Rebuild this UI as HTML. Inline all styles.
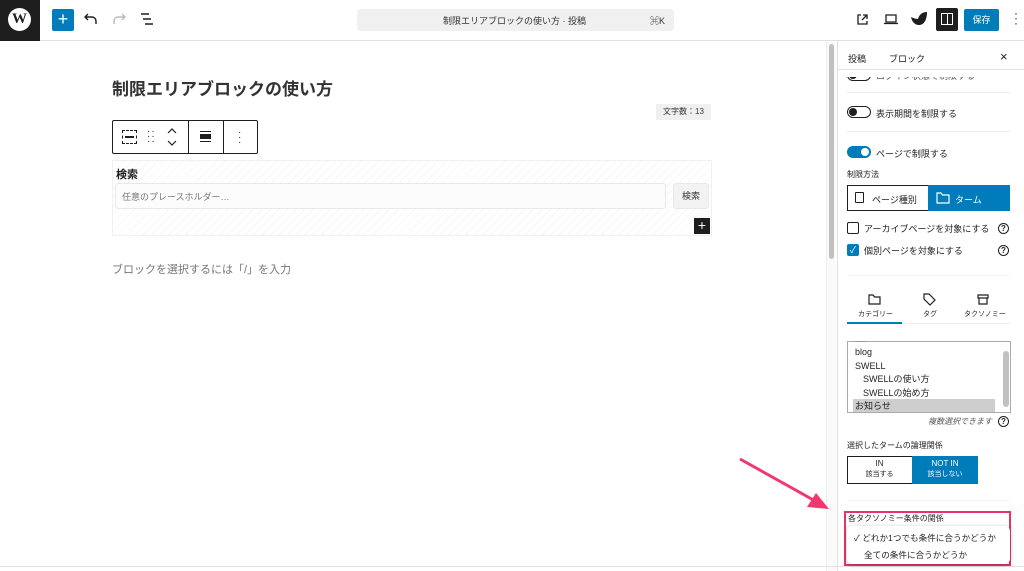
<!DOCTYPE html>
<html><head><meta charset="utf-8"><style>
*{box-sizing:border-box;margin:0;padding:0}
body{width:1024px;height:571px;overflow:hidden;background:#fff;font-family:"Liberation Sans","Noto Sans CJK JP",sans-serif;color:#1e1e1e;position:relative}
.a{position:absolute}
.t{font-size:9px;white-space:nowrap}
.tog{position:absolute;width:24px;height:12px;border-radius:6px;border:1px solid #1e1e1e;background:#fff}
.tog::after{content:"";position:absolute;left:1px;top:1px;width:8px;height:8px;border-radius:50%;background:#1e1e1e}
.hr{position:absolute;left:847px;width:163px;height:1px;background:#eee}
</style></head><body>
<div class="a" style="left:0;top:0;width:1024px;height:41px;border-bottom:1px solid #e0e0e0"></div>
<div class="a" style="left:0;top:0;width:40px;height:41px;background:#1e1e1e"></div>
<div class="a" style="left:8px;top:8px;width:23px;height:23px;border-radius:50%;background:#fff;color:#1e1e1e;font:bold 15px 'Liberation Serif',serif;text-align:center;line-height:23px">W</div>
<div class="a" style="left:52px;top:9px;width:22px;height:22px;background:#007cba;border-radius:2px;color:#fff;text-align:center;line-height:21px;font-size:18px">+</div>
<svg class="a" style="left:84px;top:13px" width="14" height="12"><path d="M4 1L1 4l3 3M1 4h7a4 4 0 0 1 4 4v3" stroke="#1e1e1e" stroke-width="1.4" fill="none"/></svg>
<svg class="a" style="left:112px;top:13px" width="14" height="12"><path d="M10 1l3 3-3 3M13 4H6a4 4 0 0 0-4 4v3" stroke="#bbb" stroke-width="1.4" fill="none"/></svg>
<svg class="a" style="left:140px;top:13px" width="14" height="12"><path d="M1 1h8M3 6h8M5 11h8" stroke="#1e1e1e" stroke-width="1.5"/></svg>
<div class="a" style="left:357px;top:9px;width:317px;height:22px;background:#f0f0f0;border-radius:3px"></div>
<div class="a t" style="left:443px;top:14px;font-size:9px;color:#333">制限エリアブロックの使い方 · 投稿</div>
<div class="a t" style="left:650px;top:14px;font-size:9px;color:#333">⌘K</div>
<svg class="a" style="left:856px;top:13px" width="13" height="13"><path d="M5 2H2v9h9V8M7 2h4v4M11 2L6 7" stroke="#1e1e1e" stroke-width="1.3" fill="none"/></svg>
<svg class="a" style="left:884px;top:13px" width="14" height="12"><path d="M2 2h10v7H2zM0 10.5h14" stroke="#1e1e1e" stroke-width="1.3" fill="none"/></svg>
<svg class="a" style="left:910px;top:11px" width="18" height="15"><path d="M17 1C12 1 9 4 8 8 6 8 3 7 1 6c1 5 4 8 8 8 5 0 8-5 8-13z" fill="#1e1e1e"/></svg>
<div class="a" style="left:936px;top:8px;width:22px;height:23px;background:#1e1e1e;border-radius:2px"></div>
<div class="a" style="left:941px;top:13px;width:12px;height:12px;border:1.3px solid #fff"></div>
<div class="a" style="left:947px;top:13px;width:1.3px;height:12px;background:#fff"></div>
<div class="a" style="left:964px;top:9px;width:35px;height:22px;background:#007cba;border-radius:2px;color:#fff;font-size:9px;text-align:center;line-height:22px">保存</div>
<div class="a" style="left:1014px;top:11px;font-size:12px;line-height:5px;color:#1e1e1e">·<br>·<br>·</div>

<div class="a" style="left:112px;top:75px;font-size:17px;font-weight:bold;color:#333">制限エリアブロックの使い方</div>
<div class="a t" style="left:656px;top:104px;width:55px;height:16px;background:#f0f0f0;font-size:8px;text-align:center;line-height:16px;color:#333">文字数：13</div>
<div class="a" style="left:112px;top:120px;width:146px;height:34px;border:1px solid #1e1e1e;border-radius:2px;background:#fff"></div>
<div class="a" style="left:188px;top:121px;width:1px;height:32px;background:#1e1e1e"></div>
<div class="a" style="left:223px;top:121px;width:1px;height:32px;background:#1e1e1e"></div>
<div class="a" style="left:122px;top:130px;width:15px;height:14px;border:1px dashed #1e1e1e"></div>
<div class="a" style="left:125px;top:136px;width:9px;height:2px;background:#1e1e1e"></div>
<div class="a" style="left:147px;top:129px;font-size:10px;line-height:5px;letter-spacing:1px">··<br>··<br>··</div>
<svg class="a" style="left:166px;top:128px" width="12" height="18"><path d="M2 5l4-4 4 4M2 13l4 4 4-4" stroke="#1e1e1e" stroke-width="1.2" fill="none"/></svg>
<div class="a" style="left:200px;top:131px;width:11px;height:1px;background:#1e1e1e"></div>
<div class="a" style="left:200px;top:134px;width:11px;height:5px;background:#1e1e1e"></div>
<div class="a" style="left:200px;top:141px;width:11px;height:1px;background:#1e1e1e"></div>
<div class="a" style="left:238px;top:130px;font-size:10px;line-height:5px">·<br>·<br>·</div>
<div class="a" style="left:112px;top:160px;width:600px;height:76px;border:1px solid #f0f0f0;background:repeating-linear-gradient(-45deg,#fff 0 5px,#f6f6f6 5px 6px)"></div>
<div class="a" style="left:116px;top:166px;font-size:11px;font-weight:bold">検索</div>
<div class="a" style="left:115px;top:183px;width:551px;height:26px;border:1px solid #e8e8e8;border-radius:3px;background:#fcfcfc"></div>
<div class="a t" style="left:122px;top:190px;color:#777">任意のプレースホルダー…</div>
<div class="a" style="left:673px;top:183px;width:36px;height:26px;background:#f3f3f3;border:1px solid #e8e8e8;border-radius:3px;font-size:9px;text-align:center;line-height:24px;color:#333">検索</div>
<div class="a" style="left:694px;top:218px;width:16px;height:16px;background:#1e1e1e;color:#fff;text-align:center;line-height:15px;font-size:14px">+</div>
<div class="a" style="left:112px;top:261px;font-size:11px;color:#757575">ブロックを選択するには「/」を入力</div>
<div class="a" style="left:826px;top:42px;width:10px;height:529px;background:#fafafa;border-left:1px solid #eee"></div>
<div class="a" style="left:829px;top:44px;width:5px;height:215px;background:#c1c1c1;border-radius:3px"></div>
<div class="a" style="left:837px;top:41px;width:1px;height:530px;background:#e0e0e0"></div>
<div class="a" style="left:0;top:566px;width:1024px;height:1px;background:#e0e0e0"></div>

<div class="a t" style="left:848px;top:52px">投稿</div>
<div class="a t" style="left:889px;top:52px">ブロック</div>
<div class="a" style="left:1000px;top:49px;font-size:13px">×</div>
<div class="a" style="left:838px;top:69px;width:186px;height:1px;background:#e0e0e0"></div>
<div class="tog" style="left:847px;top:69px"></div>
<div class="a t" style="left:876px;top:69px;color:#555">ログイン状態で制限する</div>
<div class="a" style="left:838px;top:70px;width:186px;height:7px;background:#fff"></div>
<div class="a" style="left:838px;top:69px;width:186px;height:1px;background:#e0e0e0"></div>
<div class="hr" style="top:92px"></div>
<div class="tog" style="left:847px;top:106px"></div>
<div class="a t" style="left:876px;top:107px">表示期間を制限する</div>
<div class="hr" style="top:131px"></div>
<div class="a" style="left:847px;top:146px;width:24px;height:12px;border-radius:6px;background:#007cba"></div>
<div class="a" style="left:861px;top:148px;width:8px;height:8px;border-radius:50%;background:#fff"></div>
<div class="a t" style="left:876px;top:147px">ページで制限する</div>
<div class="a t" style="left:847px;top:169px;font-size:8px">制限方法</div>
<div class="a" style="left:847px;top:185px;width:163px;height:26px;border:1px solid #1e1e1e"></div>
<div class="a" style="left:928px;top:185px;width:82px;height:26px;background:#007cba"></div>
<div class="a" style="left:855px;top:192px;width:9px;height:11px;border:1.2px solid #1e1e1e;border-radius:1px"></div>
<div class="a t" style="left:872px;top:193px">ページ種別</div>
<svg class="a" style="left:936px;top:192px" width="14" height="12"><path d="M1 1h4l1.5 2H13v8H1z" stroke="#fff" stroke-width="1.2" fill="none"/></svg>
<div class="a t" style="left:955px;top:193px;color:#fff">ターム</div>
<div class="a" style="left:847px;top:222px;width:12px;height:12px;border:1px solid #1e1e1e;border-radius:2px"></div>
<div class="a t" style="left:864px;top:222px">アーカイブページを対象にする</div>
<div class="a" style="left:998px;top:223px;width:11px;height:11px;border:1.2px solid #1e1e1e;border-radius:50%;font-size:8px;text-align:center;line-height:9px;font-weight:bold">?</div>
<div class="a" style="left:847px;top:244px;width:12px;height:12px;background:#007cba;border-radius:2px;color:#fff;font-size:9px;text-align:center;line-height:12px">✓</div>
<div class="a t" style="left:864px;top:244px">個別ページを対象にする</div>
<div class="a" style="left:998px;top:245px;width:11px;height:11px;border:1.2px solid #1e1e1e;border-radius:50%;font-size:8px;text-align:center;line-height:9px;font-weight:bold">?</div>
<div class="hr" style="top:275px;background:#f3f3f3"></div>
<svg class="a" style="left:868px;top:294px" width="13" height="11"><path d="M1 1h4l1.5 2H12v7H1z" stroke="#1e1e1e" stroke-width="1.2" fill="none"/></svg>
<svg class="a" style="left:923px;top:293px" width="13" height="13"><path d="M1 1h5l6 6-5 5-6-6z" stroke="#1e1e1e" stroke-width="1.2" fill="none"/></svg>
<svg class="a" style="left:977px;top:294px" width="12" height="11"><path d="M1 1h10v3H1zM2 4v6h8V4" stroke="#1e1e1e" stroke-width="1.2" fill="none"/></svg>
<div class="a t" style="left:858px;top:309px;font-size:7px">カテゴリー</div>
<div class="a t" style="left:923px;top:309px;font-size:7px">タグ</div>
<div class="a t" style="left:964px;top:309px;font-size:7px">タクソノミー</div>
<div class="a" style="left:847px;top:322px;width:55px;height:2px;background:#007cba"></div>
<div class="a" style="left:902px;top:323px;width:108px;height:1px;background:#eee"></div>
<div class="a" style="left:847px;top:341px;width:164px;height:72px;border:1px solid #aaa;overflow:hidden"></div>
<div class="a" style="left:853px;top:399px;width:142px;height:13px;background:#cecece"></div>
<div class="a" style="left:1003px;top:351px;width:6px;height:56px;background:#c1c1c1;border-radius:3px"></div>
<div class="a" style="left:855px;top:341px;font-size:9px;line-height:13.5px;width:140px">
<div style="height:5px;overflow:hidden;line-height:0;color:#888">----</div>
<div>blog</div><div>SWELL</div><div style="padding-left:8px">SWELLの使い方</div><div style="padding-left:8px">SWELLの始め方</div><div>お知らせ</div></div>
<div class="a t" style="left:928px;top:416px;font-size:8px;font-style:italic;color:#555">複数選択できます</div>
<div class="a" style="left:998px;top:416px;width:11px;height:11px;border:1.2px solid #1e1e1e;border-radius:50%;font-size:8px;text-align:center;line-height:9px;font-weight:bold">?</div>
<div class="a t" style="left:847px;top:440px;font-size:8px">選択したタームの論理関係</div>
<div class="a" style="left:847px;top:456px;width:131px;height:28px;border:1px solid #1e1e1e"></div>
<div class="a" style="left:912px;top:456px;width:66px;height:28px;background:#007cba"></div>
<div class="a t" style="left:847px;top:459px;width:65px;text-align:center;font-size:8px;line-height:10px">IN<br><span style="font-size:7px">該当する</span></div>
<div class="a t" style="left:912px;top:459px;width:66px;text-align:center;font-size:8px;line-height:10px;color:#fff">NOT IN<br><span style="font-size:7px">該当しない</span></div>
<div class="hr" style="top:500px;background:#f3f3f3"></div>
<div class="a" style="left:844px;top:511px;width:167px;height:55px;border:2px solid #e8336a"></div>
<div class="a t" style="left:848px;top:513px;font-size:8px">各タクソノミー条件の関係</div>
<div class="a" style="left:847px;top:526px;width:163px;height:38px;background:#fff;border-radius:5px;box-shadow:0 1px 5px rgba(0,0,0,.25)"></div>
<div class="a t" style="left:854px;top:532px;font-size:8.6px">✓ どれか1つでも条件に合うかどうか</div>
<div class="a t" style="left:864px;top:549px;font-size:8.6px">全ての条件に合うかどうか</div>
<svg class="a" style="left:735px;top:455px" width="100" height="60"><path d="M5 4L82 47" stroke="#f0386f" stroke-width="3"/><path d="M94 54L72 52L81 38Z" fill="#f0386f"/></svg>
</body></html>
